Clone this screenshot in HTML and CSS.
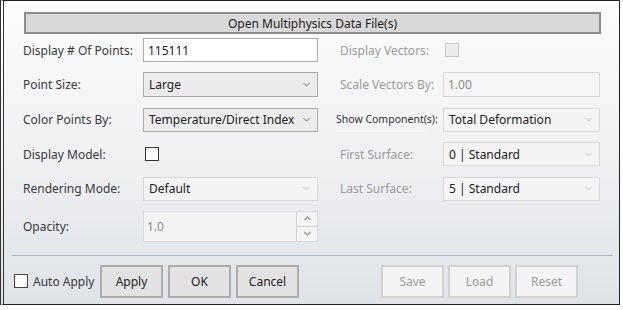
FILE: index.html
```html
<!DOCTYPE html>
<html lang="en">
<head>
    <meta charset="UTF-8">
    <title>Multiphysics Data</title>
    <link rel="stylesheet" href="styles.css">
</head>
<body>
<div class="window">
    <!-- file picker across the top -->
    <button class="open-button">Open Multiphysics Data File(s)</button>

    <div class="form">
        <label class="lbl">Display # Of Points:</label>
        <input class="field" type="text" value="115111">
        <label class="lbl off">Display Vectors:</label>
        <div class="cell"><span class="check check-off"></span></div>

        <label class="lbl">Point Size:</label>
        <div class="combo">
            <span>Large</span>
            <svg class="chev" width="7" height="5" viewBox="0 0 7 5"><polyline points="0.5,1 3.5,4 6.5,1" fill="none" stroke="#6d6d6d" stroke-width="1"/></svg>
        </div>
        <label class="lbl off">Scale Vectors By:</label>
        <input class="field field-off" type="text" value="1.00" disabled>

        <label class="lbl">Color Points By:</label>
        <div class="combo">
            <span>Temperature/Direct Index</span>
            <svg class="chev" width="7" height="5" viewBox="0 0 7 5"><polyline points="0.5,1 3.5,4 6.5,1" fill="none" stroke="#6d6d6d" stroke-width="1"/></svg>
        </div>
        <label class="lbl small">Show Component(s):</label>
        <div class="combo combo-off">
            <span>Total Deformation</span>
            <svg class="chev" width="7" height="5" viewBox="0 0 7 5"><polyline points="0.5,1 3.5,4 6.5,1" fill="none" stroke="#c4c4c4" stroke-width="1"/></svg>
        </div>

        <label class="lbl">Display Model:</label>
        <div class="cell"><span class="check"></span></div>
        <label class="lbl off">First Surface:</label>
        <div class="combo combo-off">
            <span>0 | Standard</span>
            <svg class="chev" width="7" height="5" viewBox="0 0 7 5"><polyline points="0.5,1 3.5,4 6.5,1" fill="none" stroke="#c4c4c4" stroke-width="1"/></svg>
        </div>

        <label class="lbl">Rendering Mode:</label>
        <div class="combo combo-off">
            <span>Default</span>
            <svg class="chev" width="7" height="5" viewBox="0 0 7 5"><polyline points="0.5,1 3.5,4 6.5,1" fill="none" stroke="#c4c4c4" stroke-width="1"/></svg>
        </div>
        <label class="lbl off">Last Surface:</label>
        <div class="combo combo-off">
            <span>5 | Standard</span>
            <svg class="chev" width="7" height="5" viewBox="0 0 7 5"><polyline points="0.5,1 3.5,4 6.5,1" fill="none" stroke="#c4c4c4" stroke-width="1"/></svg>
        </div>

        <label class="lbl">Opacity:</label>
        <div class="spinner">
            <span class="spin-value">1.0</span>
            <div class="spin-buttons">
                <span class="spin-btn">
                    <svg width="7" height="5" viewBox="0 0 7 5"><polyline points="0.5,4 3.5,1 6.5,4" fill="none" stroke="#9a9a9a" stroke-width="1.4"/></svg>
                </span>
                <span class="spin-btn">
                    <svg width="7" height="5" viewBox="0 0 7 5"><polyline points="0.5,1 3.5,4 6.5,1" fill="none" stroke="#9a9a9a" stroke-width="1.4"/></svg>
                </span>
            </div>
        </div>
    </div>

    <hr class="separator">

    <div class="actions">
        <label class="auto-apply"><span class="check"></span>Auto Apply</label>
        <div class="btn-group">
            <button class="btn">Apply</button>
            <button class="btn">OK</button>
            <button class="btn">Cancel</button>
        </div>
        <div class="btn-group right">
            <button class="btn btn-off">Save</button>
            <button class="btn btn-off">Load</button>
            <button class="btn btn-off">Reset</button>
        </div>
    </div>
</div>
</body>
</html>
```

FILE: styles.css
```css
body {
    margin: 0;
    background: #ffffff;
    font-family: "Noto Sans", "Open Sans", sans-serif;
    font-size: 12px;
    color: #333;
}

/* Dialog frame */
.window {
    box-sizing: border-box;
    width: 620px;
    height: 305px;
    border-top: 1px solid #222;
    border-bottom: 1px solid #222;
    border-left: 4px double #333;
    border-right: 1px solid #222;
    background: linear-gradient(#fcfcfc, #f1f2f4 45%, #dfe3e7);
    padding: 11px 0 0 0;
}

.open-button {
    display: block;
    box-sizing: border-box;
    margin-left: 20px;
    width: 577px;
    height: 22px;
    background: #d9d9d9;
    border: 2px solid #8c8c8c;
    font: inherit;
    color: #222;
    padding: 0;
}

/* Settings grid */
.form {
    display: grid;
    grid-template-columns: 120px 175px 22px 103px 157px;
    grid-template-rows: 24px 25px 24px 24px 24px 31px;
    row-gap: 10.4px;
    padding: 4px 0 0 19px;
}

.lbl {
    grid-column: 1;
    display: flex;
    align-items: center;
    white-space: nowrap;
    color: #3a3a3a;
}

.form > :nth-child(4n+2) {
    grid-column: 2;
}

.form > :nth-child(4n+3) {
    grid-column: 4;
}

.form > :nth-child(4n) {
    grid-column: 5;
}

.lbl.off {
    color: #9b9b9b;
}

.lbl.small {
    font-size: 10.5px;
    color: #333;
    margin-left: -4px;
    width: 92px;
    box-shadow: 0 1px 0 #ffffff;
    height: 22px;
}

.field {
    box-sizing: border-box;
    width: 100%;
    height: 100%;
    margin: 0;
    border: 1px solid #abadb3;
    background: #fff;
    font: inherit;
    color: #222;
    padding: 0 4px;
}

.field-off {
    background: #f5f5f5;
    border-color: #d9d9d9;
    color: #8a8a8a;
}

.cell {
    display: flex;
    align-items: center;
}

.check {
    display: inline-block;
    box-sizing: border-box;
    width: 14px;
    height: 14px;
    border: 1px solid #333;
    background: #fff;
    margin-left: 2px;
}

.check-off {
    border-color: #c8c8c8;
    background: #ececec;
}

.combo {
    box-sizing: border-box;
    display: flex;
    align-items: center;
    justify-content: space-between;
    border: 1px solid #acacac;
    background: #ececec;
    padding: 0 7px 0 5px;
    color: #222;
}

.combo-off {
    border-color: #d9d9d9;
    background: #f4f4f4;
}

.chev {
    flex: none;
}

/* Opacity spinner */
.spinner {
    display: flex;
    border: 1px solid #d9d9d9;
    background: #f4f4f4;
}

.spin-value {
    flex: 1;
    display: flex;
    align-items: center;
    padding-left: 3px;
    color: #8a8a8a;
}

.spin-buttons {
    display: flex;
    flex-direction: column;
    width: 20px;
    border-left: 1px solid #d0d0d0;
}

.spin-btn {
    flex: 1;
    display: flex;
    align-items: center;
    justify-content: center;
}

.spin-btn + .spin-btn {
    border-top: 1px solid #d0d0d0;
}

.separator {
    margin: 13px 6px 0 8px;
    border: none;
    border-top: 1px solid #a8bccb;
}

/* Bottom buttons */
.actions {
    display: flex;
    align-items: center;
    padding: 9px 0 0 8px;
}

.auto-apply {
    display: flex;
    align-items: center;
    gap: 5px;
    width: 88px;
    color: #3a3a3a;
}

.auto-apply .check {
    border-color: #444;
    margin-left: 2px;
}

.btn-group {
    display: flex;
    gap: 5px;
}

.btn-group.right {
    margin-left: 82px;
    gap: 4px;
}

.btn {
    box-sizing: border-box;
    width: 63px;
    height: 33px;
    border: 2px solid #adadad;
    background: #e2e2e2;
    font: inherit;
    color: #222;
    padding: 0;
}

.btn-off {
    border-color: #d2d2d2;
    background: #f4f4f4;
    color: #9b9b9b;
}
```
